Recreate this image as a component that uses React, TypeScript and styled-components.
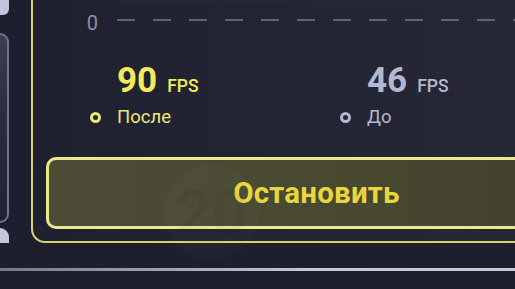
import React from "react";
import styled, { createGlobalStyle } from "styled-components";

const GlobalStyle = createGlobalStyle`
  html, body { margin: 0; padding: 0; }
  body {
    background: #1d1f2e;
    font-family: Roboto, "Noto Sans", "Liberation Sans", sans-serif;
    overflow: hidden;
  }
`;

const Screen = styled.div`
  position: relative;
  width: 515px;
  height: 289px;
  overflow: hidden;
  display: flex;
  flex-direction: column;
  background: #1d1f2e;
`;

const Main = styled.div`
  display: flex;
  align-items: flex-start;
`;

const Rail = styled.div`
  width: 9px;
  display: flex;
  flex-direction: column;
  flex-shrink: 0;
`;

const RailCap = styled.div<{ $top?: boolean }>`
  width: 9px;
  height: 15px;
  background: #c3c5dc;
  border-radius: ${(p) => (p.$top ? "0 0 6px 0" : "0 9px 0 0")};
  margin-top: ${(p) => (p.$top ? "0" : "5px")};
`;

const RailPanel = styled.div`
  margin-top: 18px;
  width: 7px;
  height: 186px;
  border: 2px solid #70738a;
  border-left: none;
  border-radius: 0 10px 10px 0;
  background: linear-gradient(180deg, #3b3e52 0%, #2a2d3e 45%, #1f2231 100%);
`;

const Card = styled.div`
  position: relative;
  margin-left: 22px;
  margin-top: -40px;
  width: 567px;
  flex-shrink: 0;
  border: 2px solid #d8d368;
  border-radius: 14px;
  padding: 0 13px 12px;
  background: linear-gradient(90deg, #1f2131 0%, #242635 60%, #282a37 100%);
  display: flex;
  flex-direction: column;
`;

const Chart = styled.div`
  display: grid;
  grid-template-columns: 65px 1fr;
  column-gap: 19px;
  margin-left: -13px;
  margin-right: -13px;
`;

const PlotBand = styled.div`
  grid-column: 2;
  height: 43px;
  background: linear-gradient(90deg, #232536, #272938);
`;

const AxisLabel = styled.div`
  grid-column: 1;
  margin-top: 8px;
  font-size: 20px;
  line-height: 20px;
  color: #8c8fa5;
  text-align: right;
`;

const AxisLine = styled.div`
  grid-column: 2;
  margin-top: 14px;
  height: 2px;
  background: repeating-linear-gradient(
    90deg,
    #5f6276 0 18px,
    transparent 18px 36px
  );
`;

const Stats = styled.div`
  display: flex;
  padding-left: 43px;
  margin-top: 30px;
`;

const Stat = styled.div`
  width: 250px;
  display: grid;
  grid-template-columns: 28px auto;
  row-gap: 8px;
  align-items: center;
`;

const Value = styled.div<{ $c: string }>`
  grid-column: 2;
  display: flex;
  align-items: baseline;
  gap: 10px;
  color: ${(p) => p.$c};
  font-weight: 700;
  font-size: 35px;
  line-height: 35px;
`;

const Unit = styled.span`
  font-size: 17.5px;
  font-weight: 500;
  line-height: 17px;
`;

const Ring = styled.span<{ $c: string }>`
  grid-column: 1;
  width: 5px;
  height: 5px;
  border: 3px solid ${(p) => p.$c};
  border-radius: 50%;
  margin-left: 0.5px;
`;

const Label = styled.div<{ $c: string }>`
  grid-column: 2;
  font-size: 18.5px;
  line-height: 22px;
  color: ${(p) => p.$c};
`;

const StopButton = styled.button`
  box-sizing: border-box;
  margin-top: 29px;
  height: 72px;
  width: 541px;
  border: 3px solid #ebe98c;
  border-radius: 10px;
  background: linear-gradient(90deg, #4d4c37 0%, #48472f 60%, #414030 100%);
  color: #e8d73c;
  font-family: Roboto, "Noto Sans", sans-serif;
  font-weight: 700;
  font-size: 29.5px;
  letter-spacing: 0.2px;
  padding: 0;
  cursor: pointer;
`;

const Watermark = styled.div`
  position: absolute;
  left: 131px;
  top: 203px;
  width: 95px;
  height: 95px;
  border-radius: 50%;
  background: rgba(255, 255, 255, 0.018);
  display: flex;
  align-items: center;
  justify-content: center;
  font-size: 62px;
  font-weight: 700;
  color: rgba(0, 0, 0, 0.045);
  pointer-events: none;
`;

const Divider = styled.div`
  margin-top: 25px;
  height: 3px;
  background: linear-gradient(90deg, #75778b 0%, #a3a6bb 35%, #c4c6da 60%, #c6c8dc 100%);
`;

export default function App() {
  return (
    <>
      <GlobalStyle />
      <Screen>
        <Main>
          <Rail>
            <RailCap $top />
            <RailPanel />
            <RailCap />
          </Rail>
          <Card>
            <Chart>
              <PlotBand />
              <AxisLabel>0</AxisLabel>
              <AxisLine />
            </Chart>
            <Stats>
              <Stat>
                <Value $c="#f4ea5c">
                  90<Unit>FPS</Unit>
                </Value>
                <Ring $c="#efe870" />
                <Label $c="#efe870">После</Label>
              </Stat>
              <Stat>
                <Value $c="#b5b8cd">
                  46<Unit>FPS</Unit>
                </Value>
                <Ring $c="#b5b8cd" />
                <Label $c="#b5b8cd">До</Label>
              </Stat>
            </Stats>
            <StopButton>Остановить</StopButton>
            <Watermark>20</Watermark>
          </Card>
        </Main>
        <Divider />
      </Screen>
    </>
  );
}
